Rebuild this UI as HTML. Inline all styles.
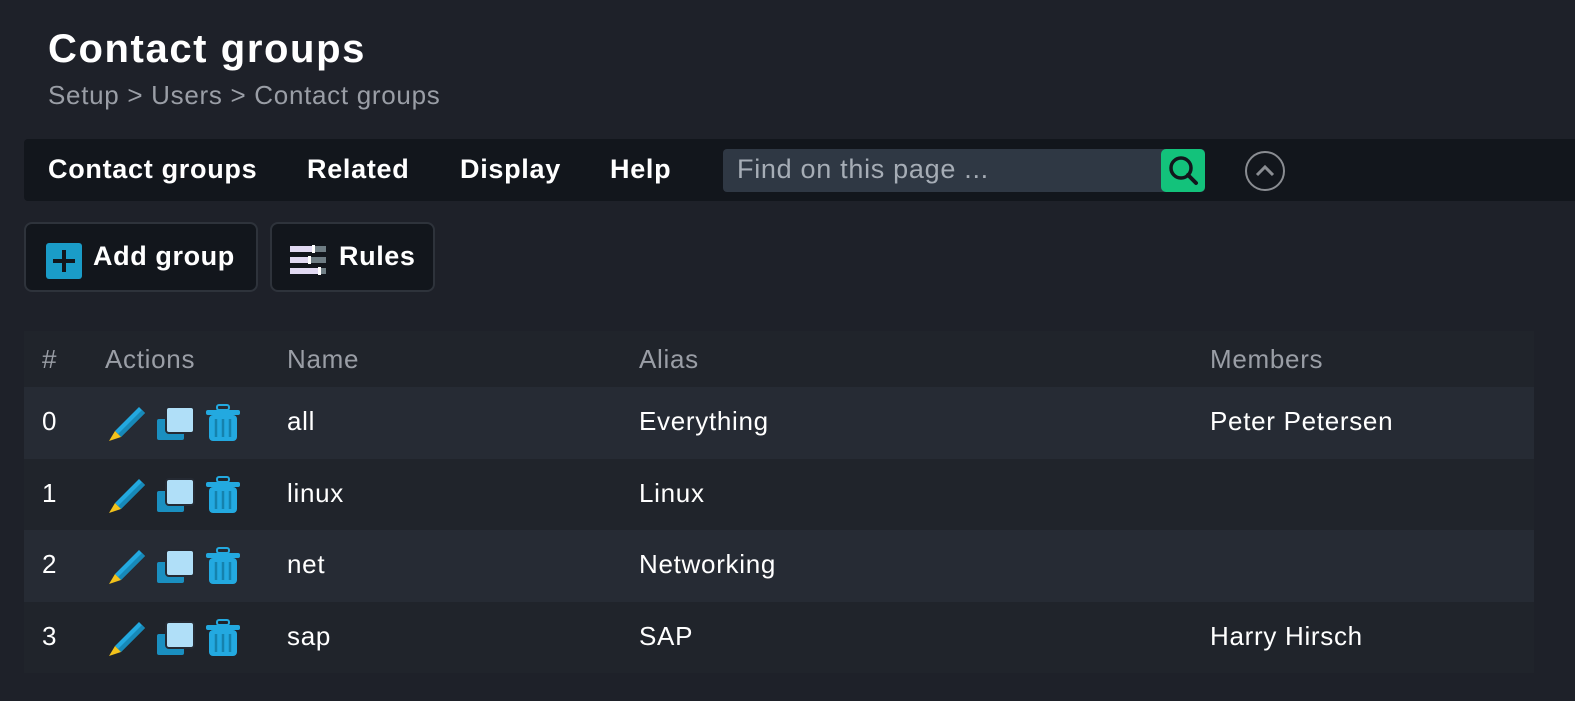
<!DOCTYPE html>
<html><head><style>
body{margin:0;width:1575px;height:701px;background:#1e2129;font-family:"Liberation Sans",sans-serif;color:#fff;overflow:hidden;position:relative}
.a{position:absolute}
h1{position:absolute;left:48px;top:27px;margin:0;font-size:40px;font-weight:bold;letter-spacing:1.6px}
.bc{left:48px;top:80px;font-size:26px;color:#9a9ea6;letter-spacing:.7px}
.menu{left:24px;top:139px;width:1551px;height:62px;background:#12161c;border-radius:4px 0 0 4px}
.menu span{position:absolute;top:15px;font-size:27px;font-weight:bold;letter-spacing:.7px}
.search{left:723px;top:149px;width:482px;height:43px;background:#2f3844;border-radius:4px}
.search span{position:absolute;left:14px;top:5px;font-size:27px;color:#a6adb6;letter-spacing:.7px}
.btn{top:222px;height:70px;background:#12161c;border:2px solid #2e333b;border-radius:8px;box-sizing:border-box}
.btn span{position:absolute;top:17px;font-size:27px;font-weight:bold;letter-spacing:.6px}
.tbl{left:24px;top:331px;width:1510px}
.row{position:relative;height:71.5px;font-size:26px;letter-spacing:.7px}
.row div{position:absolute;top:19px}
.hd{height:56px;background:#20242b;color:#9a9ea6}
.hd div{top:13px}
</style></head><body>
<h1>Contact groups</h1>
<div class="a bc">Setup &gt; Users &gt; Contact groups</div>
<div class="a menu">
<span style="left:24px">Contact groups</span>
<span style="left:283px">Related</span>
<span style="left:436px">Display</span>
<span style="left:586px">Help</span>
</div>
<div class="a search"><span>Find on this page ...</span>
<div class="a" style="left:438px;top:0;width:44px;height:43px;background:#13c27b;border-radius:5px">
<svg width="44" height="43" viewBox="0 0 44 43"><circle cx="20" cy="19" r="10" fill="none" stroke="#12161c" stroke-width="3.5"/><line x1="27" y1="26" x2="35" y2="34" stroke="#12161c" stroke-width="4" stroke-linecap="round"/></svg></div>
</div>
<svg class="a" style="left:1244px;top:150px" width="42" height="42"><circle cx="21" cy="21" r="19" fill="none" stroke="#8a8d92" stroke-width="2"/><path d="M13 25 L21 17 L29 25" fill="none" stroke="#8a8d92" stroke-width="3"/></svg>
<div class="a btn" style="left:24px;width:234px">
<svg class="a" style="left:20px;top:19px" width="36" height="36"><rect width="36" height="36" rx="3" fill="#1a9cc8"/><path d="M18 7v22M7 18h22" stroke="#12161c" stroke-width="4"/></svg>
<span style="left:67px">Add group</span></div>
<div class="a btn" style="left:270px;width:165px">
<svg class="a" style="left:18px;top:21px" width="38" height="30"><rect x="0" y="1" width="36" height="6" fill="#e1d9f2"/><rect x="24" y="1" width="12" height="6" fill="#6f7d84"/><rect x="22" y="0" width="3" height="8" fill="#fff"/><rect x="0" y="12" width="36" height="6" fill="#e1d9f2"/><rect x="20" y="12" width="16" height="6" fill="#6f7d84"/><rect x="18" y="11" width="3" height="8" fill="#fff"/><rect x="0" y="23" width="36" height="6" fill="#e1d9f2"/><rect x="30" y="23" width="6" height="6" fill="#6f7d84"/><rect x="28" y="22" width="3" height="8" fill="#fff"/></svg>
<span style="left:67px">Rules</span></div>
<div class="a tbl">
<div class="row hd"><div style="left:18px">#</div><div style="left:81px">Actions</div><div style="left:263px">Name</div><div style="left:615px">Alias</div><div style="left:1186px">Members</div></div>
<div id="rows"></div>
</div>
<script>
var d=[["0","all","Everything","Peter Petersen"],["1","linux","Linux",""],["2","net","Networking",""],["3","sap","SAP","Harry Hirsch"]];
var ic='<svg style="position:absolute;left:83px;top:16px" width="135" height="40" viewBox="0 0 135 40"><path d="M32 4 L38 10 L14 34 L8 28 Z" fill="#23a9e0"/><path d="M35 7 L38 10 L14 34 L11 31 Z" fill="#1789b8"/><path d="M8 28 L14 34 L2 38 Z" fill="#f2c21b"/><rect x="50" y="16" width="27" height="21" rx="2" fill="#1a8fc0"/><rect x="59" y="4" width="28" height="26" rx="3" fill="#b0dff8" stroke="#252a33" stroke-width="2"/><rect x="102" y="12" width="28" height="26" rx="4" fill="#23a9e0"/><rect x="99" y="7" width="34" height="5" rx="2" fill="#23a9e0"/><rect x="110" y="2" width="12" height="5" rx="2" fill="none" stroke="#23a9e0" stroke-width="2"/><path d="M109 16v18M116 16v18M123 16v18" stroke="#1582ad" stroke-width="2.5"/></svg>';
var h="";d.forEach(function(r,i){h+='<div class="row" style="background:'+(i%2?'#20242b':'#262b34')+'"><div style="left:18px">'+r[0]+'</div>'+ic+'<div style="left:263px">'+r[1]+'</div><div style="left:615px">'+r[2]+'</div><div style="left:1186px">'+r[3]+'</div></div>'});
document.getElementById("rows").innerHTML=h;
</script>
</body></html>
